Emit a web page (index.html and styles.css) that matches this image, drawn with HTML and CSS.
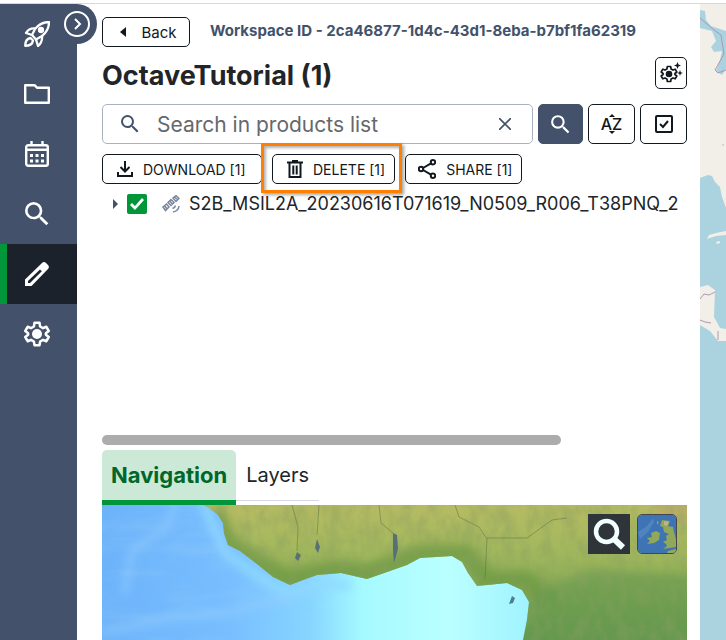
FILE: index.html
```html
<!DOCTYPE html>
<html lang="en">
<head>
<meta charset="utf-8">
<meta name="viewport" content="width=device-width, initial-scale=1">
<title>Workspace</title>
<link rel="stylesheet" href="styles.css">
</head>
<body>
<svg class="defs" aria-hidden="true">
  <symbol id="search" viewBox="0 0 24 24"><path fill="currentColor" d="M15.5 14h-.79l-.28-.27A6.47 6.47 0 0 0 16 9.5 6.5 6.5 0 1 0 9.5 16c1.61 0 3.09-.59 4.23-1.57l.27.28v.79l5 4.99L20.49 19l-4.99-5zm-6 0C7.01 14 5 11.99 5 9.5S7.01 5 9.5 5 14 7.01 14 9.5 11.99 14 9.5 14z"/></symbol>
  <symbol id="gear" viewBox="0 0 24 24"><path fill="none" stroke="currentColor" stroke-width="2" stroke-linejoin="round" d="M10 3h4l.5 3 2.3 1.3 2.6-1.1 2 3.4-2.3 1.8v1.2l2.3 1.8-2 3.4-2.6-1.1-2.3 1.3-.5 3h-4l-.5-3-2.3-1.3-2.6 1.1-2-3.4 2.3-1.8v-1.2L2.600 9.600l2-3.400 2.600 1.100L9.500 6z"/><circle cx="12" cy="12" r="4" fill="currentColor"/></symbol>
</svg>
<div class="app">
  <nav class="sidebar" aria-label="Main">
    <a class="nav-item" href="#" aria-label="Start"><svg width="26" height="26" viewBox="0 0 26 26" fill="none" stroke="currentColor" stroke-width="2.300" stroke-linejoin="round"><path d="M25 1C19 1 14.500 3.500 11 8L8 14l4 4.500 6-3.500C22.500 11.500 25 7 25 1z"/><path d="M11.500 7.500C7 7 4 8.500 2 12l6 2M18 14.500c.5 4.500-1 8-4 10.500l-2-6.500"/><path d="M6.500 17C3 17.500 1.200 20 1.200 24.800 6 24.800 8.500 23 9 19.500z"/><circle cx="17" cy="9" r="2" fill="currentColor"/></svg></a>
    <a class="nav-item" href="#" aria-label="Files"><svg width="26" height="20" viewBox="0 0 26 20" fill="none" stroke="currentColor" stroke-width="2.400" stroke-linejoin="round"><path d="M1.200 1.200h9.300l2.500 2.500h11.800v15.100H1.200z"/></svg></a>
    <a class="nav-item" href="#" aria-label="Calendar"><svg width="24" height="26" viewBox="0 0 24 26" fill="none" stroke="currentColor" stroke-width="2.400"><rect x="1.200" y="4.200" width="21.600" height="20.600" rx="2"/><path d="M1 8.700h22M6.500 0v5M17.500 0v5"/><path stroke-width="3" stroke-dasharray="3 2.500" d="M5 14.500h14M5 20h14"/></svg></a>
    <a class="nav-item" href="#" aria-label="Search"><svg width="32" height="32"><use href="#search"/></svg></a>
    <a class="nav-item active" href="#" aria-label="Workspaces" aria-current="page"><svg width="24" height="24" viewBox="0 0 24 24" fill="currentColor"><path d="M0 24v-6.500L17 1q2-1.800 4 0l2 2q1.800 2 0 4L6.500 24z"/><path fill="#1b222c" d="M3 21v-2L15 7.500l1.800 1.800L5 21z"/></svg></a>
    <a class="nav-item" href="#" aria-label="Settings"><svg width="30" height="30"><use href="#gear"/></svg></a>
    <button class="toggle" aria-label="Expand menu"><svg width="26" height="26" viewBox="0 0 26 26" fill="none" stroke="currentColor" stroke-width="2"><circle cx="13" cy="13" r="12"/><path d="M11 8l5 5-5 5"/></svg></button>
  </nav>
  <main class="panel">
    <header class="top">
      <button class="btn back"><svg width="6" height="10" viewBox="0 0 6 10"><path fill="currentColor" d="M6 0v10L0 5z"/></svg>Back</button>
      <span class="workspace-id">Workspace ID - 2ca46877-1d4c-43d1-8eba-b7bf1fa62319</span>
    </header>
    <div class="heading">
      <h1>OctaveTutorial (1)</h1>
      <button class="btn square" aria-label="Workspace options"><svg width="24" height="24" viewBox="0 0 24 24"><use href="#gear" x="0" y="3" width="20" height="20"/><path fill="currentColor" d="M18.500 1l1 2.500L22 4.500l-2.500 1-1 2.500-1-2.500-2.500-1 2.500-1zM21 9l.8 2.200L24 12l-2.200.8L21 15l-.8-2.200L18 12l2.200-.8z"/></svg></button>
    </div>
    <form class="search-row" onsubmit="return false">
      <label class="search-box">
        <svg width="24" height="24"><use href="#search"/></svg>
        <input type="text" placeholder="Search in products list" aria-label="Search in products list">
        <button type="button" class="clear" aria-label="Clear"><svg width="12" height="12" viewBox="0 0 12 12" fill="none" stroke="currentColor" stroke-width="1.600"><path d="M0 0l12 12M12 0L0 12"/></svg></button>
      </label>
      <button class="btn tool primary" aria-label="Search"><svg width="25" height="25"><use href="#search"/></svg></button>
      <button type="button" class="btn tool sort" aria-label="Sort by name"><svg width="6" height="3" viewBox="0 0 6 3"><path fill="currentColor" d="M0 3h6L3 0z"/></svg><span>AZ</span><svg width="6" height="3" viewBox="0 0 6 3"><path fill="currentColor" d="M0 0h6L3 3z"/></svg></button>
      <button type="button" class="btn tool" aria-label="Select all"><svg width="18" height="18" viewBox="0 0 18 18" fill="none" stroke="currentColor" stroke-width="2"><rect x="1" y="1" width="16" height="16" rx="1"/><path d="M5 9l3 3 5-6"/></svg></button>
    </form>
    <div class="actions">
      <button class="btn download"><svg width="16" height="16" viewBox="0 0 16 16" fill="none" stroke="currentColor" stroke-width="2"><path d="M8 0v10M3.500 6L8 10.500 12.500 6M1 11v4h14v-4"/></svg>DOWNLOAD [1]</button>
      <div class="highlight"><button class="btn"><svg width="16" height="18" viewBox="0 0 16 18" fill="none" stroke="currentColor" stroke-width="2"><path d="M0 2.500h16M5 1h6M2.500 3v14h11V3M6.300 5.500v9M9.700 5.500v9"/></svg>DELETE [1]</button></div>
      <button class="btn share"><svg width="18" height="20" viewBox="0 0 18 20" fill="none" stroke="currentColor" stroke-width="2"><circle cx="3" cy="10" r="2.200"/><circle cx="15" cy="3.200" r="2.200"/><circle cx="15" cy="16.800" r="2.200"/><path d="M5 9l8-4.700M5 11l8 4.700"/></svg>SHARE [1]</button>
    </div>
    <section class="products" aria-label="Products">
      <div class="product">
        <button class="expand" aria-label="Expand product"><svg width="5" height="10" viewBox="0 0 5 10"><path fill="currentColor" d="M0 0v10l5-5z"/></svg></button>
        <input type="checkbox" id="product-1" checked>
        <svg class="satellite" width="18" height="18" viewBox="0 0 18 18" fill="none" stroke="currentColor" stroke-width="1.500"><path d="M1 12l3.500-3L7 12l-3.500 3.500zM6 7.500l3-3 3 3-3 3zM11 3l3-2.500 3 3L14 6.500zM2.500 10.500L5 14M12.500 2L16 5M7.500 6l3 3"/><path d="M10.500 13.500q2.500-.5 3-3M11 17q5.500-1 6-6"/></svg>
        <label for="product-1">S2B_MSIL2A_20230616T071619_N0509_R006_T38PNQ_2</label>
      </div>
    </section>
    <div class="scrollbar"><div class="thumb"></div></div>
    <div class="tabs" role="tablist">
      <button class="tab selected" role="tab" aria-selected="true">Navigation</button>
      <button class="tab" role="tab" aria-selected="false">Layers</button>
    </div>
    <div class="minimap">
      <svg class="terrain" viewBox="0 0 585 135" preserveAspectRatio="xMinYMin slice" aria-hidden="true">
        <defs>
          <linearGradient id="land" x1="0" y1="0" x2="0" y2="1"><stop offset="0" stop-color="#b6bb63"/><stop offset=".4" stop-color="#9fb75c"/><stop offset=".75" stop-color="#78a350"/><stop offset="1" stop-color="#64964f"/></linearGradient>
          <linearGradient id="sea" x1="0" y1="0" x2="1" y2="0"><stop offset="0" stop-color="#6db3fa"/><stop offset=".3" stop-color="#78bfff"/><stop offset=".48" stop-color="#88d6ff"/><stop offset=".6" stop-color="#a5faff"/><stop offset=".8" stop-color="#baffff"/><stop offset="1" stop-color="#9df2ff"/></linearGradient>
          <linearGradient id="fade"><stop offset=".5" stop-color="#fff"/><stop offset="1" stop-color="#000"/></linearGradient>
          <mask id="west"><path fill="url(#fade)" d="M0 0h240v135H0z"/></mask>
          <filter id="soft" x="-20%" y="-20%" width="140%" height="140%"><feGaussianBlur stdDeviation="5"/></filter>
          <filter id="grain"><feTurbulence type="fractalNoise" baseFrequency=".08 .05" numOctaves="4" seed="4"/><feColorMatrix values="0 0 0 0 .25  0 0 0 0 .35  0 0 0 0 .12  2.500 0 0 0 -.9"/></filter>
          <filter id="waves"><feTurbulence type="fractalNoise" baseFrequency=".015 .06" numOctaves="4" seed="9"/><feColorMatrix values="0 0 0 0 .3  0 0 0 0 .6  0 0 0 0 .95  2 0 0 0 -.8"/></filter>
          <clipPath id="coast"><path d="M101 0l6 3 9 7 5 8 1 10 4 12 12 6 17 13 16 13 17 8 13-5 14-5 24-2 26 6 20-7 20-7 13-7 32-2 10 6 6 11 9 13 30-3 15 7 7 12-2 18-4 20H585V0z"/></clipPath>
        </defs>
        <path fill="url(#sea)" d="M0 0h435v135H0z"/>
        <g filter="url(#soft)"><path fill="none" stroke="#90daff" stroke-width="8" d="M100-5l14 32 10 22 44 30 21 10 30-11 30 3"/><path fill="none" stroke="#96ceff" stroke-width="6" opacity=".6" d="M75-5L65 22 30 45l-8 45M0 128l70-14 60-8 60-14"/></g>
        <g mask="url(#west)"><path filter="url(#waves)" opacity=".35" d="M0 0h240v135H0z"/></g>
        <g clip-path="url(#coast)">
          <path fill="url(#land)" d="M95 0h490v135H95z"/>
          <g filter="url(#soft)"><path fill="none" stroke="#6c9a43" stroke-width="20" opacity=".75" d="M112 8l14 32 30 18 31 17 45-10 33 4 55-20 44 0 22 27 38-1 28 24"/><path fill="#c3a96b" opacity=".7" d="M550-5h40v22h-30z"/><path fill="#66994f" opacity=".6" d="M430 90l60-25 100 5v80H420z"/></g>
          <path filter="url(#grain)" opacity=".4" d="M95 0h490v135H95z"/>
          <g fill="none" stroke="#5a7440" opacity=".5"><path d="M190 0l6 22-1 24M217 0l-2 30M277 0l2 18 12 10M353 0l4 12 20 10 8 12-2 40M385 33h40l25-18 15-2"/></g>
          <path fill="#4b657a" opacity=".85" d="M291 28l4 2 1 14-4 14-1-12zM215 34l3 8-2 6-3-5zM195 47l4 3-3 6-3-3z"/>
        </g>
        <path fill="#4f7d8e" d="M410 91l3 2-2 5-4 1z"/>
      </svg>
      <div class="map-tools">
        <button class="map-search" aria-label="Zoom to search"><svg width="34" height="34" viewBox="0 0 34 34" fill="none" stroke="currentColor"><circle cx="14.500" cy="14.500" r="10.500" stroke-width="4.500"/><path stroke-width="6" d="M22 22l9 8.500"/></svg></button>
        <button class="map-layer" aria-label="Base map"><svg width="38" height="38" viewBox="0 0 38 38"><path fill="#3e73b4" d="M0 0h38v38H0z"/><path fill="#4f84be" d="M0 17l9-6 6-8 1 4-6 10-8 7z"/><path fill="#91a85a" d="M24 5l8 1-2 5 5 1 1 5 2 7v8l-13 2 4-3-1-2-3-2 4-2-1-4 3-2-5-2-1-5-3-1zM9 23l5-1-1-4 5-2 4 2-1 7-5 3-7 1 3-3zM19 6l2 1-2 3zM30 36l8-2v4h-9z"/><path fill="#c2b48a" d="M26 6l5 1-2 4-3-1z"/></svg></button>
      </div>
    </div>
  </main>
  <aside class="world" aria-label="World map">
    <svg viewBox="0 0 26 636" preserveAspectRatio="xMinYMin slice" aria-hidden="true">
      <g fill="#f2efe9"><path d="M0 0h26v204l-4-11-2-10-5-5-3-6-4-1-8 3zM7 235l2-4 7-2 10-2v4l-10 1zM16 238l4-1v2l-3 1zM0 283l8-2 7 5-1 27 6 11 6 1v12h-8l-8-10-10-6z"/></g>
      <g fill="#aad3df"><path d="M0 6l5 1 1 9 5 6 15 5v38l-4 6-6-4 4-11 2-9-8 1-3-5 5-6-4-10-12-3zM21 141l3-1v2z"/></g>
      <path fill="none" stroke="#ad97b3" d="M0 14l7 6 7 6 7 5 3 19-5 9-4 7 3 3 8-3M0 295l4-5 5 1 6-3M0 316l5 2 6 1M18 327v9"/>
    </svg>
  </aside>
</div>
</body>
</html>
```
FILE: styles.css
```css
* { box-sizing: border-box; }
body {
  margin: 0;
  background: #fff;
  color: #212529;
  font-family: Inter, "Open Sans", sans-serif;
  font-size: 15px;
}
button, input { font: inherit; color: inherit; }
button { padding: 0; border: 0; background: none; cursor: pointer; }
svg { display: block; flex: none; }
.defs { position: absolute; width: 0; height: 0; }

.app {
  display: flex;
  min-height: 100vh;
  padding-top: 3px;
}
.sidebar {
  position: relative;
  flex: 0 0 77px;
  border-top: 1px solid #d5d8dd;
  background: #43526a;
  color: #fff;
}
.nav-item {
  display: flex;
  align-items: center;
  justify-content: center;
  height: 60px;
  padding-right: 3px;
  color: #fff;
}
.nav-item.active {
  border-left: 7px solid #009639;
  padding-right: 10px;
  background: #1b222c;
}
.toggle {
  position: absolute;
  top: 0;
  right: -20px;
  width: 40px;
  height: 40px;
  border-radius: 20px;
  background: #43526a;
  color: #fff;
}
.toggle svg { margin: 0 auto; }

.panel {
  display: flex;
  flex: 1;
  flex-direction: column;
  min-width: 0;
  padding: 13px 13px 0 25px;
  border-top: 1px solid #d5d8dd;
}
.btn {
  display: flex;
  align-items: center;
  justify-content: center;
  gap: 10px;
  height: 30px;
  padding: 0 9px 0 14px;
  border: 1px solid #111820;
  border-radius: 5px;
  background: #fff;
  color: #111820;
  white-space: nowrap;
}
.top { display: flex; align-items: flex-start; gap: 20px; }
.back { gap: 15px; width: 88px; }
.workspace-id { color: #43526a; font-weight: 700; line-height: 28px; }
.heading {
  display: flex;
  align-items: flex-start;
  justify-content: space-between;
  margin-top: 10px;
}
h1 { margin: 0; font-size: 27px; line-height: 37px; }
.square { width: 32px; height: 32px; padding: 0; }

.search-row { display: flex; gap: 5px; margin-top: 10px; }
.search-box {
  display: flex;
  flex: 1;
  align-items: center;
  gap: 15px;
  min-width: 0;
  height: 40px;
  padding: 0 21px 0 15px;
  border: 1px solid #a9b2c0;
  border-radius: 5px;
  color: #43526a;
}
.search-box input {
  flex: 1;
  min-width: 0;
  padding: 0;
  border: 0;
  outline: 0;
  background: none;
  font-size: 21px;
}
.search-box input::placeholder { color: #65686c; opacity: 1; }
.tool { width: 47px; height: 40px; padding: 0; }
.primary { width: 45px; border-color: #43526a; background: #43526a; color: #fff; }
.sort { flex-direction: column; gap: 0; font-size: 16px; font-weight: 500; line-height: 14px; }

.actions { display: flex; gap: 10px; margin-top: 10px; font-size: 14px; }
.download { min-width: 160px; justify-content: flex-start; }
.share { padding-left: 12px; }
.highlight { position: relative; }
.highlight::after {
  content: "";
  position: absolute;
  inset: -11px -7px -9px -11px;
  border: 3px solid #ff8000;
  box-shadow: 2px 2px 3px rgba(0, 0, 0, .35), inset 2px 2px 3px rgba(0, 0, 0, .3);
  pointer-events: none;
}

.products { flex: 1; margin-top: 10px; overflow: hidden; }
.product { display: flex; align-items: center; height: 20px; padding-left: 10px; }
.product label { font-size: 18px; line-height: 20px; white-space: nowrap; }
.expand { width: 15px; color: #43526a; }
.expand svg { margin-left: 1px; }
.product input {
  width: 20px;
  height: 20px;
  margin: 0;
  border-radius: 2px;
  background: #009639;
  appearance: none;
}
.product input:checked::before {
  content: "";
  display: block;
  width: 20px;
  height: 20px;
  background: #fff;
  clip-path: polygon(3px 11px, 5px 9px, 8px 12px, 15px 4px, 17px 6px, 8px 16px);
}
.satellite { margin: 0 9px 0 15px; color: #7b879b; }

.scrollbar { height: 10px; }
.thumb { width: 78.5%; height: 10px; border-radius: 5px; background: #acacac; }
.tabs { display: flex; margin-top: 5px; }
.tab {
  height: 51px;
  padding: 0 10px;
  border-bottom: 1px solid #d5d8e0;
  font-size: 20px;
}
.tab.selected {
  height: 55px;
  padding: 0 9px;
  border-bottom: 5px solid #009639;
  border-radius: 5px 5px 0 0;
  background: #cce9d7;
  color: #006629;
  font-size: 22px;
  font-weight: 700;
}
.minimap { position: relative; height: 135px; overflow: hidden; }
.terrain { width: 100%; height: 100%; }
.map-tools {
  position: absolute;
  top: 9px;
  right: 10px;
  display: flex;
  gap: 7px;
}
.map-search, .map-layer {
  display: flex;
  align-items: center;
  justify-content: center;
  width: 40px;
  height: 40px;
}
.map-search { width: 42px; background: #2e3439; color: #f2ffff; }
.map-layer { overflow: hidden; border: 1px solid #48454a; border-radius: 5px; }

.world {
  position: relative;
  flex: 0 0 26px;
  border-top: 1px solid #d5d8dd;
  background: #aad3df;
  overflow: hidden;
}
.world svg { width: 100%; height: 100%; }
```
